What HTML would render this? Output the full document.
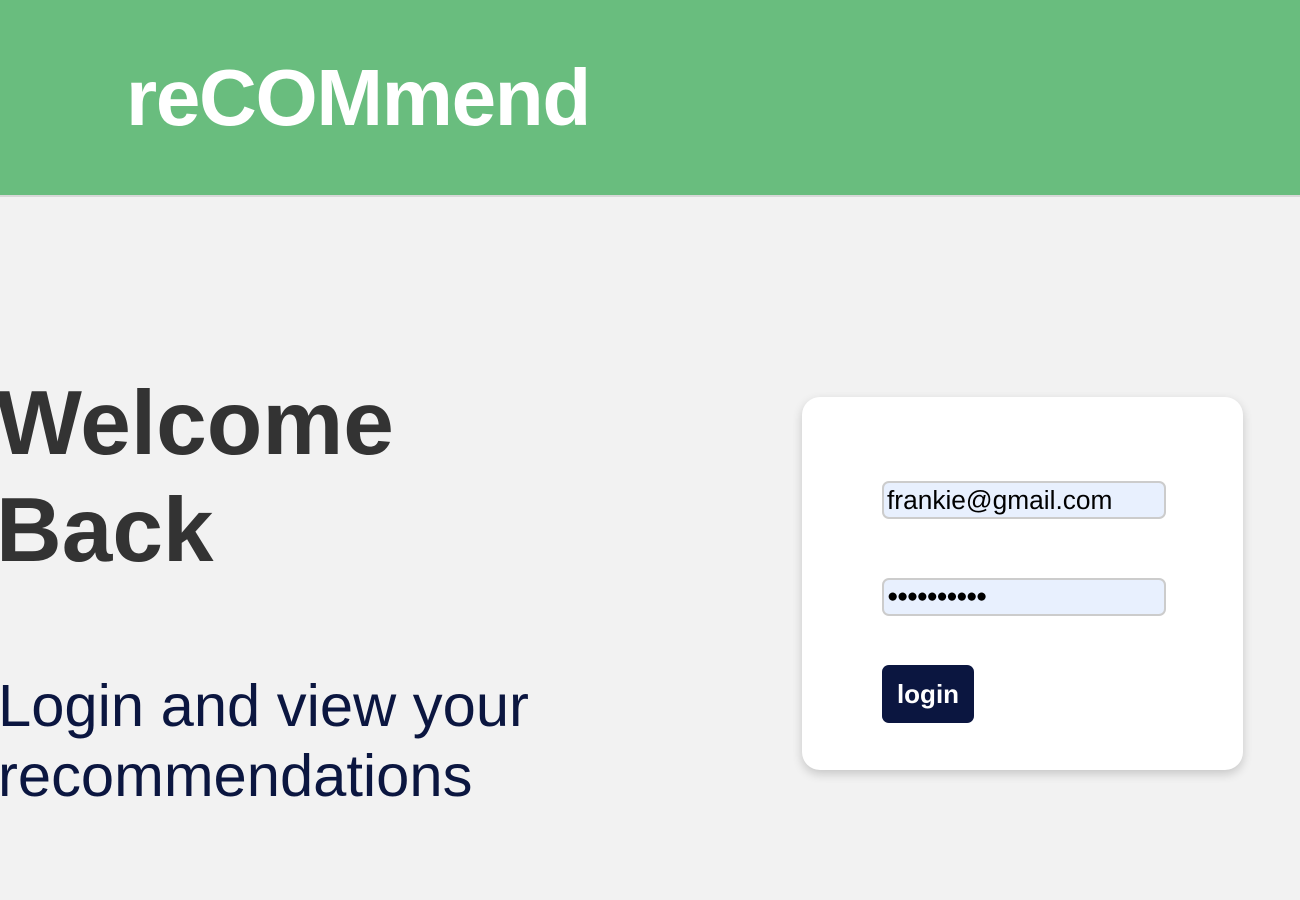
<!DOCTYPE html>
<html><head><style>
body{margin:0;width:1300px;height:900px;background:#f2f2f2;font-family:"Liberation Sans",Helvetica,Arial,sans-serif;overflow:hidden;position:relative}
.hdr{position:absolute;left:0;top:0;width:1300px;height:195px;background:#69bd7e;border-bottom:2px solid #d8d8d8}
.hdr h1{position:absolute;left:126px;top:53px;margin:0;font-size:80px;line-height:90px;color:#fff;font-weight:bold;letter-spacing:-1.3px}
.w{position:absolute;left:-4px;top:370px;margin:0;font-size:91px;line-height:107px;color:#333;font-weight:bold}
.s{position:absolute;left:-2px;top:671px;margin:0;font-size:59.7px;line-height:70px;color:#0b1640}
.card{position:absolute;left:802px;top:397px;width:441px;height:373px;background:#fff;border-radius:18px;box-shadow:0 4px 10px rgba(0,0,0,0.18)}
.in{position:absolute;left:80px;width:277px;height:34px;background:#e8f0fe;border:2px solid #ccc;border-radius:7px;font-size:26.3px;line-height:34px;padding-left:3px;box-sizing:content-box;color:#000}
.btn{position:absolute;left:80px;top:268px;width:92px;height:58px;background:#0b1640;border-radius:7px;color:#fff;font-weight:bold;font-size:26px;line-height:58px;text-align:center}
</style></head><body>
<div class="hdr"><h1>reCOMmend</h1></div>
<div class="w">Welcome<br>Back</div>
<div class="s">Login and view your<br>recommendations</div>
<div class="card">
<div class="in" style="top:84px">frankie@gmail.com</div>
<div class="in" style="top:181px;font-size:19px;letter-spacing:-1.6px">●●●●●●●●●●</div>
<div class="btn">login</div>
</div>
</body></html>
